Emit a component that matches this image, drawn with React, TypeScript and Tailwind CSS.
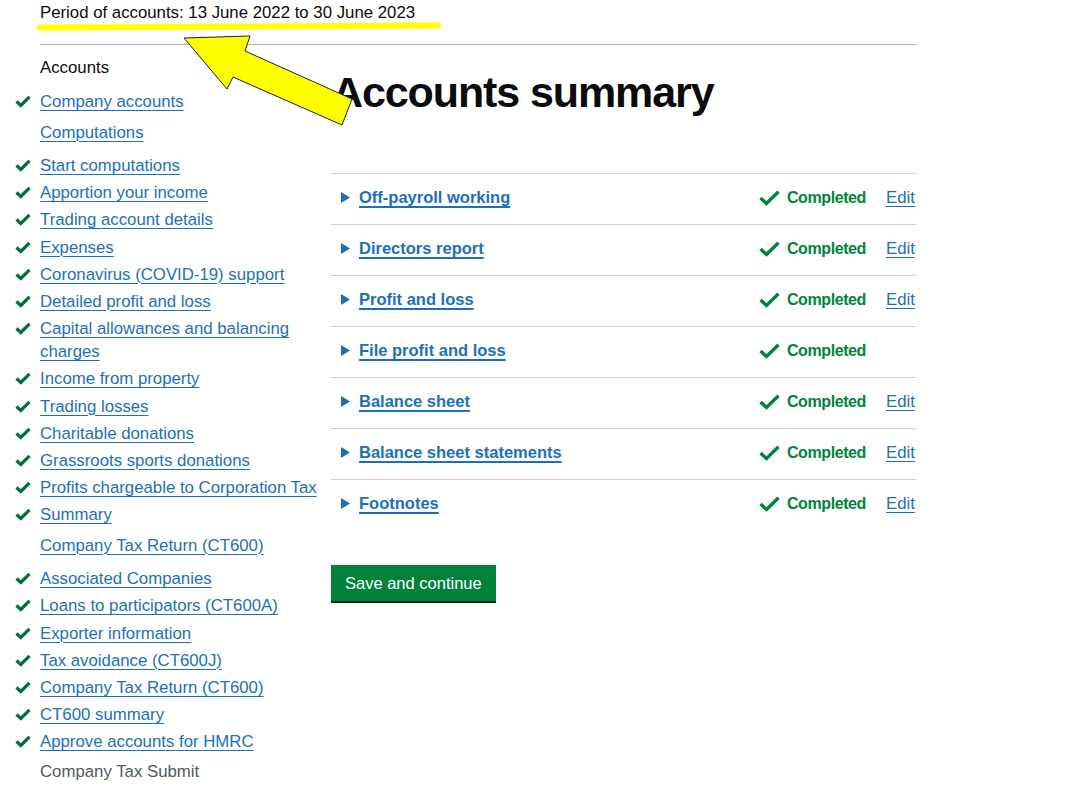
import React from "react";

type NavItem = { label: string; kind: "done" | "heading" | "plain" | "title" };

const nav: NavItem[] = [
  { label: "Accounts", kind: "title" },
  { label: "Company accounts", kind: "done" },
  { label: "Computations", kind: "heading" },
  { label: "Start computations", kind: "done" },
  { label: "Apportion your income", kind: "done" },
  { label: "Trading account details", kind: "done" },
  { label: "Expenses", kind: "done" },
  { label: "Coronavirus (COVID-19) support", kind: "done" },
  { label: "Detailed profit and loss", kind: "done" },
  { label: "Capital allowances and balancing charges", kind: "done" },
  { label: "Income from property", kind: "done" },
  { label: "Trading losses", kind: "done" },
  { label: "Charitable donations", kind: "done" },
  { label: "Grassroots sports donations", kind: "done" },
  { label: "Profits chargeable to Corporation Tax", kind: "done" },
  { label: "Summary", kind: "done" },
  { label: "Company Tax Return (CT600)", kind: "heading" },
  { label: "Associated Companies", kind: "done" },
  { label: "Loans to participators (CT600A)", kind: "done" },
  { label: "Exporter information", kind: "done" },
  { label: "Tax avoidance (CT600J)", kind: "done" },
  { label: "Company Tax Return (CT600)", kind: "done" },
  { label: "CT600 summary", kind: "done" },
  { label: "Approve accounts for HMRC", kind: "done" },
  { label: "Company Tax Submit", kind: "plain" },
];

const sections = [
  { name: "Off-payroll working", edit: true },
  { name: "Directors report", edit: true },
  { name: "Profit and loss", edit: true },
  { name: "File profit and loss", edit: false },
  { name: "Balance sheet", edit: true },
  { name: "Balance sheet statements", edit: true },
  { name: "Footnotes", edit: true },
];

function SmallTick() {
  return (
    <svg width="16" height="13" viewBox="0 0 16 13" className="shrink-0">
      <path d="M1.5 6.5 L5.8 10.5 L14.5 1.8" fill="none" stroke="#00703c" strokeWidth="3.2" />
    </svg>
  );
}

function BigTick() {
  return (
    <svg width="21" height="16" viewBox="0 0 21 16" className="shrink-0">
      <path d="M1.5 8 L7.5 13.5 L19.5 1.8" fill="none" stroke="#00843d" strokeWidth="3.4" />
    </svg>
  );
}

function Arrow() {
  return (
    <svg className="absolute left-0 top-0 pointer-events-none" width="460" height="140" viewBox="0 0 460 140">
      <path d="M40 27.5 L438 25.5" stroke="#ffff00" strokeWidth="6" strokeLinecap="round" />
      <polygon
        points="184,38 250,36 245,51 352,99 342,125 233,77 227,89"
        fill="#ffff00"
        stroke="#222"
        strokeWidth="1"
        strokeLinejoin="miter"
      />
    </svg>
  );
}

function Sidebar() {
  return (
    <div className="w-[291px] shrink-0 pt-[11px] text-[16.8px] leading-[23px]">
      {nav.map((item, i) => {
        if (item.kind === "title") {
          return (
            <div key={i} className="text-[#0b0c0c] mb-[11px]">
              {item.label}
            </div>
          );
        }
        if (item.kind === "heading") {
          return (
            <div key={i} className="mt-[7.5px] mb-[10.5px]">
              <a className="text-[#1d70b8] underline underline-offset-[3px] decoration-1 cursor-pointer">
                {item.label}
              </a>
            </div>
          );
        }
        if (item.kind === "plain") {
          return (
            <div key={i} className="mt-[7px] text-[#505a5f]">
              {item.label}
            </div>
          );
        }
        return (
          <div key={i} className="flex -ml-[26px] mb-[4.2px]">
            <div className="w-[26px] shrink-0 pt-[5px] pl-[1px]">
              <SmallTick />
            </div>
            <a className="text-[#1d70b8] underline underline-offset-[3px] decoration-1 cursor-pointer">
              {item.label}
            </a>
          </div>
        );
      })}
    </div>
  );
}

function Main() {
  return (
    <div className="flex-1">
      <h1 className="text-[43px] leading-[50px] font-bold text-[#0b0c0c] tracking-[-1.1px] pt-[22px] ml-[1px]">
        Accounts summary
      </h1>
      <div className="mt-[56px]">
        {sections.map((s, i) => (
          <div key={i} className="flex items-start h-[51px] border-t border-[#cfd1d2] pt-[12px]">
            <div className="pl-[10px] pt-[6px] w-[28px] shrink-0">
              <svg width="9" height="11" viewBox="0 0 9 11">
                <polygon points="0,0 9,5.5 0,11" fill="#1d70b8" />
              </svg>
            </div>
            <a className="font-bold text-[16.5px] leading-[23px] text-[#1d70b8] underline underline-offset-[3px] decoration-[1.5px] cursor-pointer">
              {s.name}
            </a>
            <div className="ml-auto flex items-start">
              <div className="pt-[4px] mr-[7px]">
                <BigTick />
              </div>
              <span className="font-bold text-[16px] leading-[23px] text-[#00843d] tracking-[-0.4px]">
                Completed
              </span>
              <div className="w-[50px] pl-[20px]">
                {s.edit && (
                  <a className="text-[16.8px] leading-[23px] text-[#1d70b8] underline underline-offset-[3px] decoration-1 cursor-pointer">
                    Edit
                  </a>
                )}
              </div>
            </div>
          </div>
        ))}
      </div>
      <button className="mt-[35px] bg-[#00823b] text-white text-[16.5px] leading-[22px] px-[14px] pt-[7px] pb-[7px] shadow-[0_2px_0_#002d18]">
        Save and continue
      </button>
    </div>
  );
}

export default function App() {
  return (
    <div className="relative min-h-[800px] bg-white" style={{ fontFamily: '"Liberation Sans", Arial, sans-serif' }}>
      <div className="ml-[40px] w-[876px]">
        <div className="h-[45px] border-b border-[#b1b4b6] pt-[3px] text-[16.8px] leading-[20px] text-[#0b0c0c]">
          Period of accounts: 13 June 2022 to 30 June 2023
        </div>
        <div className="flex">
          <Sidebar />
          <Main />
        </div>
      </div>
      <Arrow />
    </div>
  );
}
